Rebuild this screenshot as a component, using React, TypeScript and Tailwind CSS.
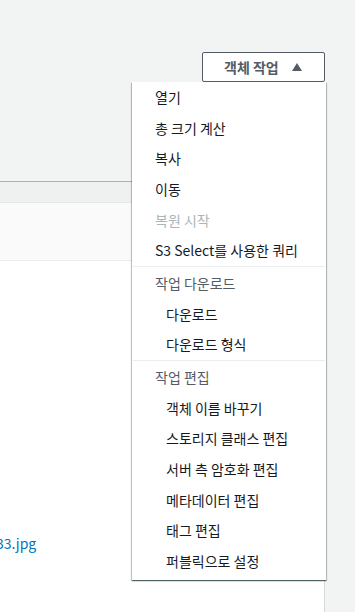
import React from 'react';

type Item = { label: string; kind?: 'disabled' | 'header' | 'sub' };

const groups: Item[][] = [
  [
    { label: '열기' },
    { label: '총 크기 계산' },
    { label: '복사' },
    { label: '이동' },
    { label: '복원 시작', kind: 'disabled' },
    { label: 'S3 Select를 사용한 쿼리' },
  ],
  [
    { label: '작업 다운로드', kind: 'header' },
    { label: '다운로드', kind: 'sub' },
    { label: '다운로드 형식', kind: 'sub' },
  ],
  [
    { label: '작업 편집', kind: 'header' },
    { label: '객체 이름 바꾸기', kind: 'sub' },
    { label: '스토리지 클래스 편집', kind: 'sub' },
    { label: '서버 측 암호화 편집', kind: 'sub' },
    { label: '메타데이터 편집', kind: 'sub' },
    { label: '태그 편집', kind: 'sub' },
    { label: '퍼블릭으로 설정', kind: 'sub' },
  ],
];

const itemClass = (kind?: Item['kind']) => {
  if (kind === 'disabled') return 'pl-[22px] text-[#aab7b8]';
  if (kind === 'header') return 'pl-[22px] text-[#545b64]';
  if (kind === 'sub') return 'pl-[33px] text-[#16191f]';
  return 'pl-[22px] text-[#16191f]';
};

const ActionsMenu: React.FC = () => (
  <div className="absolute left-[132px] top-[82px] w-[194px] bg-white shadow-[0_1px_1px_0_rgba(0,28,36,0.5),1px_1px_1px_0_rgba(0,28,36,0.2),-1px_1px_1px_0_rgba(0,28,36,0.2)] pb-[3px]">
    {groups.map((group, gi) => (
      <div key={gi} className={gi > 0 ? 'border-t border-[#eaeded] mx-[1px] pt-[1px]' : 'mx-[1px]'}>
        {group.map((item) => (
          <div key={item.label} className={`h-[30.7px] flex items-center text-[14px] ${itemClass(item.kind)}`}>
            {item.label}
          </div>
        ))}
      </div>
    ))}
  </div>
);

export default function App() {
  return (
    <div
      className="relative w-[355px] h-[612px] overflow-hidden bg-[#f2f3f3]"
      style={{ fontFamily: '"Noto Sans CJK KR", "Noto Sans", sans-serif' }}
    >
      {/* top bar with the actions button */}
      <div className="h-[181px] flex justify-end items-start pt-[52px] pr-[30px]">
        <button className="h-[30px] w-[123px] flex items-center pl-[21px] gap-[13px] bg-white border border-[#545b64] rounded-[2px] text-[14px] font-bold text-[#545b64]">
          <span>객체 작업</span>
          <svg width="10" height="8" viewBox="0 0 10 8">
            <path d="M5 0 L10 8 L0 8 Z" fill="#545b64" />
          </svg>
        </button>
      </div>

      {/* objects table */}
      <div className="w-[325px] h-[431px] bg-white border-r border-[#d5dbdb] border-t border-t-[#a5b3b3]">
        <div className="h-[21px] bg-[#eff1f1] border-b border-[#e4e8e8]" />
        <div className="h-[58px] bg-[#fafafa] border-b border-[#eaeded]" />
        <div className="h-[292px] flex items-end">
          <a className="-ml-[4px] text-[14px] text-[#0073bb] leading-[20px]" href="#">
            33.jpg
          </a>
        </div>
      </div>

      <ActionsMenu />
    </div>
  );
}
